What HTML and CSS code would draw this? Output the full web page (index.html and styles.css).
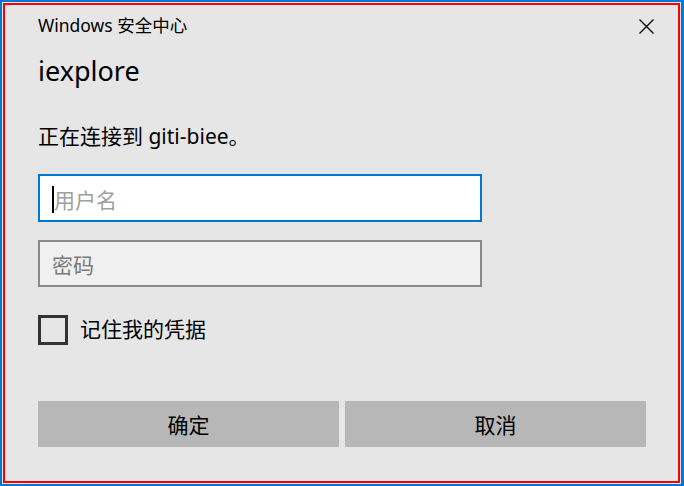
FILE: index.html
```html
<!DOCTYPE html>
<html lang="zh-CN">
<head>
<meta charset="utf-8">
<title>Windows 安全中心</title>
<link rel="stylesheet" href="styles.css">
</head>
<body>
<div class="frame">
  <div class="dialog">
    <div class="titlebar">
      <div class="title">Windows 安全中心</div>
      <div class="close" aria-label="关闭">
        <svg width="15" height="15" viewBox="0 0 15 15"><path d="M0.5 0.5 L14.5 14.5 M14.5 0.5 L0.5 14.5" stroke="#000" stroke-width="1.3" fill="none"/></svg>
      </div>
    </div>
    <div class="app">iexplore</div>
    <div class="message">正在连接到 giti-biee。</div>
    <div class="field focused"><span class="caret"></span><span class="ph ph-user">用户名</span></div>
    <div class="field pass"><span class="ph ph-pass">密码</span></div>
    <div class="remember"><span class="box"></span><span class="label">记住我的凭据</span></div>
    <div class="buttons">
      <div class="btn">确定</div>
      <div class="btn">取消</div>
    </div>
  </div>
</div>
</body>
</html>
```
FILE: styles.css
```css
html, body {
  margin: 0;
  padding: 0;
}
body {
  width: 684px;
  height: 486px;
  overflow: hidden;
  background: #0078d7;
  font-family: "Noto Sans", "Noto Sans CJK SC", sans-serif;
  color: #000;
}
.frame {
  box-sizing: border-box;
  margin: 2px 3px 2px 2px;
  height: 482px;
  border: 1px solid #e6e6e6;
}
.dialog {
  box-sizing: border-box;
  height: 100%;
  border: 2px solid #ff0000;
  background: #e6e6e6;
  padding: 8px 0 0 33px;
  display: flex;
  flex-direction: column;
}
.titlebar {
  display: flex;
  justify-content: space-between;
  align-items: flex-start;
  padding-right: 24px;
}
.title {
  font-size: 17.5px;
  line-height: 24px;
}
.close {
  width: 15px;
  height: 15px;
  margin-top: 6px;
  display: flex;
}
.app {
  font-size: 27px;
  line-height: 36px;
  margin-top: 16px;
}
.message {
  font-size: 21px;
  line-height: 28px;
  margin-top: 33px;
}
.field {
  box-sizing: border-box;
  width: 444px;
  height: 48px;
  border: 2px solid #0078d7;
  background: #fff;
  margin-top: 24px;
  display: flex;
  align-items: center;
  padding-left: 12px;
  font-size: 21px;
}
.field.pass {
  height: 47px;
  border-color: #8a8a8a;
  background: #f0f0f0;
  margin-top: 18px;
}
.caret {
  width: 2px;
  height: 27px;
  background: #000;
  margin-top: 2px;
}
.ph {
  color: #a0a0a0;
  line-height: 28px;
  padding-top: 3px;
}
.ph-pass {
  color: #7a7a7a;
  padding-top: 2px;
}
.remember {
  display: flex;
  align-items: center;
  margin-top: 28px;
  gap: 12px;
}
.box {
  box-sizing: border-box;
  width: 30px;
  height: 30px;
  border: 3px solid #333;
}
.label {
  font-size: 21px;
  line-height: 28px;
  margin-top: -3px;
}
.buttons {
  display: flex;
  gap: 6px;
  margin-top: 56px;
}
.btn {
  width: 301px;
  height: 46px;
  background: #b7b7b7;
  display: flex;
  align-items: center;
  justify-content: center;
  font-size: 21px;
}
```
